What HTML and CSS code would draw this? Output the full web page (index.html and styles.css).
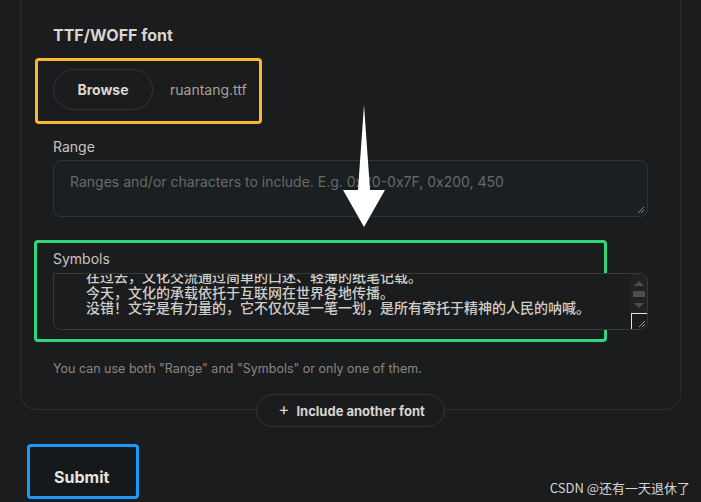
FILE: index.html
```html
<!DOCTYPE html>
<html lang="en">
<head>
<meta charset="utf-8">
<title>Font subset</title>
<link rel="stylesheet" href="styles.css">
</head>
<body>
<div class="page">
  <div class="card">
    <div class="title">TTF/WOFF font</div>
    <div class="annot annot-orange">
      <button class="browse">Browse</button>
      <span class="filename">ruantang.ttf</span>
    </div>
    <div class="label">Range</div>
    <div class="field range">
      <span class="placeholder">Ranges and/or characters to include. E.g. 0x20-0x7F, 0x200, 450</span>
      <svg class="grip" width="8" height="8" viewBox="0 0 8 8"><path d="M7 1 L1 7 M7 4 L4 7" stroke="#8a8a8a" stroke-width="1"/></svg>
    </div>
    <div class="annot annot-green">
      <div class="label label-sym">Symbols</div>
      <div class="field symbols">
        <div class="sym-text">
          <div>在过去，文化交流通过简单的口述、轻薄的纸笔记载。</div>
          <div>今天，文化的承载依托于互联网在世界各地传播。</div>
          <div>没错！文字是有力量的，它不仅仅是一笔一划，是所有寄托于精神的人民的呐喊。</div>
        </div>
        <div class="scrollbar">
          <span class="sb-up"></span>
          <span class="sb-thumb"></span>
          <span class="sb-down"></span>
          <span class="sb-corner">
            <svg width="8" height="8" viewBox="0 0 8 8"><path d="M7 1 L1 7 M7 4 L4 7" stroke="#9a9a9a" stroke-width="1"/></svg>
          </span>
        </div>
      </div>
    </div>
    <p class="help">You can use both "Range" and "Symbols" or only one of them.</p>
  </div>
  <div class="include-row">
    <button class="include"><span class="plus">+</span>Include another font</button>
  </div>
  <div class="annot annot-blue">
    <button class="submit">Submit</button>
  </div>
</div>
<svg class="arrow" width="48" height="126" viewBox="0 0 48 126">
  <polygon points="24,2 30,87 45,87 24,124 3,87 18,87" fill="#ffffff"/>
</svg>
<div class="watermark">CSDN @还有一天退休了</div>
</body>
</html>
```

FILE: styles.css
```css
html, body {
  margin: 0;
  padding: 0;
}
body {
  background: #1b1c1e;
  width: 701px;
  height: 502px;
  overflow: hidden;
  position: relative;
  font-family: Inter, "Noto Sans", sans-serif;
  color: #d6d3ce;
}
.page {
  padding-left: 20px;
  width: 661px;
}
.card {
  border: 1px solid #2b2c2f;
  border-top: none;
  border-radius: 0 0 16px 16px;
  padding: 25px 32px 31px 32px;
}
.title {
  font-size: 16px;
  font-weight: 700;
  line-height: 20px;
  color: #d8d5d0;
  margin-bottom: 13px;
}
.annot {
  box-sizing: border-box;
  border-radius: 4px;
}
.annot-orange {
  border: 3px solid #fbb730;
  margin-left: -18px;
  width: 227px;
  padding: 8px 0 11px 15px;
  display: flex;
  align-items: center;
  gap: 17px;
}
.browse {
  flex-shrink: 0;
  width: 100px;
  height: 41px;
  border: 1px solid #333437;
  border-radius: 21px;
  background: transparent;
  color: #dbd8d3;
  font-family: Inter, sans-serif;
  font-size: 14px;
  font-weight: 700;
  padding: 0;
}
.filename {
  font-size: 14px;
  color: #a6a29c;
  white-space: nowrap;
}
.label {
  margin-top: 14px;
  font-size: 14px;
  line-height: 17px;
  color: #c9c5c0;
  margin-bottom: 5px;
}
.field {
  box-sizing: border-box;
  width: 595px;
  height: 57px;
  border-radius: 8px;
  position: relative;
}
.range {
  background: #1a1f22;
  border: 1px solid #2c3236;
  padding: 11px 16px;
  font-size: 14px;
  line-height: 20px;
}
.placeholder {
  color: #67696b;
}
.grip {
  position: absolute;
  right: 2px;
  bottom: 2px;
}
.annot-green {
  border: 3px solid #31d57e;
  margin-top: 23px;
  margin-left: -19px;
  width: 573px;
  padding: 7px 0 9px 16px;
}
.label-sym {
  margin-top: 0;
  margin-bottom: 6px;
}
.symbols {
  border: 1px solid #3a3834;
  background: #1b1c1e;
  overflow: hidden;
  border-radius: 0 8px 8px 8px;
}
.sym-text {
  font-family: "Noto Sans CJK SC", sans-serif;
  font-size: 14px;
  line-height: 15.5px;
  color: #d2cdc7;
  font-weight: 500;
  padding-left: 32px;
  margin-top: -5px;
  white-space: nowrap;
}
.scrollbar {
  position: absolute;
  top: 0;
  right: 0;
  width: 16px;
  bottom: 0;
  background: #202224;
  display: flex;
  flex-direction: column;
  align-items: center;
}
.sb-up {
  margin-top: 7px;
  width: 0;
  height: 0;
  border-left: 5px solid transparent;
  border-right: 5px solid transparent;
  border-bottom: 5px solid #4b4d50;
}
.sb-thumb {
  margin-top: 5px;
  width: 12px;
  height: 6px;
  background: #4c4e51;
}
.sb-down {
  margin-top: 6px;
  width: 0;
  height: 0;
  border-left: 5px solid transparent;
  border-right: 5px solid transparent;
  border-top: 5px solid #4b4d50;
}
.sb-corner {
  position: absolute;
  right: -1px;
  bottom: -1px;
  width: 16px;
  height: 16px;
  border-left: 1px solid #e4e4e4;
  border-top: 1px solid #e4e4e4;
  background: #1b1c1e;
  display: flex;
  align-items: flex-end;
  justify-content: flex-end;
}
.sb-corner svg {
  margin: 0 2px 2px 0;
}
.help {
  margin: 18px 0 0 0;
  font-size: 12.5px;
  line-height: 18px;
  color: #8a8680;
}
.include-row {
  display: flex;
  justify-content: center;
  margin-top: -16px;
}
.include {
  box-sizing: border-box;
  width: 189px;
  height: 33px;
  border: 1px solid #333437;
  border-radius: 17px;
  background: #1b1c1e;
  color: #d8d5d0;
  font-family: Inter, sans-serif;
  font-size: 13px;
  font-weight: 700;
  display: flex;
  align-items: center;
  justify-content: center;
  gap: 7px;
  padding: 0 0 0 2px;
}
.plus {
  font-size: 17px;
  font-weight: 400;
  line-height: 1;
  margin-top: -2px;
}
.annot-blue {
  border: 3px solid #1a9bfb;
  margin: 17px 0 0 7px;
  width: 112px;
  height: 55px;
  background: #15191c;
}
.submit {
  background: transparent;
  border: none;
  color: #e6e3de;
  font-family: Inter, sans-serif;
  font-size: 16px;
  font-weight: 700;
  line-height: 20px;
  padding: 20px 0 0 24px;
}
.arrow {
  position: absolute;
  left: 340px;
  top: 103px;
}
.watermark {
  position: absolute;
  right: 11px;
  bottom: 6px;
  font-family: "Noto Sans CJK SC", sans-serif;
  font-size: 13px;
  line-height: 16px;
  color: #d6d6d6;
}
```
